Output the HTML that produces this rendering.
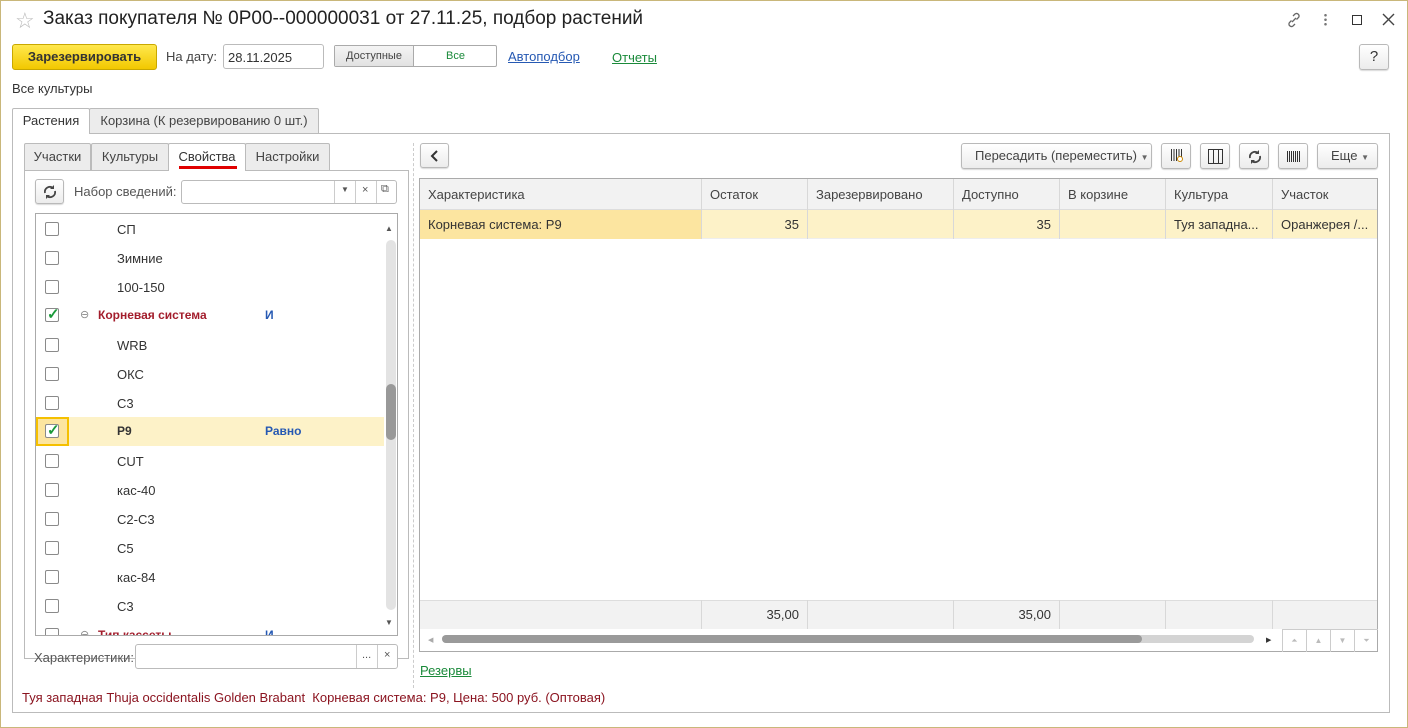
<!DOCTYPE html>
<html><head><meta charset="utf-8">
<style>
*{box-sizing:border-box}
body{margin:0;width:1408px;height:728px;overflow:hidden;background:#fff;font-family:"Liberation Sans",Arial,sans-serif;font-size:13px;color:#333;position:relative}
.a{position:absolute}
.frame{left:0;top:0;width:1408px;height:728px;border:1px solid #c9b77a}
.btn{position:absolute;border:1px solid #b9b9b9;border-radius:3px;background:linear-gradient(#fff,#ececec);box-shadow:0 1px 1px rgba(0,0,0,.15)}
.inp{position:absolute;border:1px solid #bbb;border-radius:3px;background:#fff}
.tab{position:absolute;border:1px solid #bbb;border-bottom:none;background:#ececec;text-align:center;color:#444;border-radius:2px 2px 0 0}
.cb{position:absolute;left:45px;width:14px;height:14px;border:1px solid #8a8a8a;border-radius:2px;background:#fff}
.col{position:absolute;top:0;height:100%;border-left:1px solid #d8d8d8}
.hd{position:absolute;top:8px;color:#444}
.ck{position:absolute;left:47px;color:#1a9a3a;font-size:15px;font-weight:bold}
</style></head><body>
<div class="a frame"></div>
<div class="a" style="left:15px;top:8px;font-size:22px;color:#bbb">☆</div>
<div class="a" style="left:43px;top:8px;font-size:19px;color:#222">Заказ покупателя № 0P00--000000031 от 27.11.25, подбор растений</div>
<svg class="a" style="left:1285px;top:11px" width="18" height="18" viewBox="0 0 18 18"><g fill="none" stroke="#666" stroke-width="1.3"><path d="M7 11l4-4"/><path d="M8 5l2-2a2.5 2.5 0 013.5 3.5l-2 2"/><path d="M10 13l-2 2a2.5 2.5 0 01-3.5-3.5l2-2"/></g></svg>
<div class="a" style="left:1324px;top:13px;width:3px;height:14px;background:radial-gradient(circle,#777 1.2px,transparent 1.4px) 0 0/3px 4.5px"></div>
<div class="a" style="left:1352px;top:15px;width:10px;height:10px;border:1.3px solid #333"></div>
<svg class="a" style="left:1382px;top:13px" width="13" height="13"><path d="M1 1l11 11M12 1L1 12" stroke="#444" stroke-width="1.4"/></svg>

<div class="a" style="left:12px;top:44px;width:145px;height:26px;border:1px solid #c9a800;border-radius:3px;background:linear-gradient(#ffe84d,#f2c800);font-weight:bold;text-align:center;line-height:24px;color:#333;font-size:13px">Зарезервировать</div>
<div class="a" style="left:166px;top:49px;color:#444">На дату:</div>
<div class="inp" style="left:223px;top:44px;width:101px;height:25px"><span class="a" style="left:4px;top:5px;color:#333">28.11.2025</span></div>
<div class="a" style="left:334px;top:45px;width:163px;height:22px;border:1px solid #aaa;border-radius:2px;background:#fff"><div class="a" style="left:0;top:0;width:79px;height:20px;background:linear-gradient(#f4f4f4,#e2e2e2);border-right:1px solid #aaa;font-size:11px;text-align:center;line-height:20px;color:#444">Доступные</div><div class="a" style="left:80px;top:0;width:81px;height:20px;font-size:11px;text-align:center;line-height:20px;color:#1a8a3a">Все</div></div>
<div class="a" style="left:508px;top:49px;color:#2659b3;text-decoration:underline">Автоподбор</div>
<div class="a" style="left:612px;top:50px;color:#1a8a3a;text-decoration:underline">Отчеты</div>
<div class="btn" style="left:1359px;top:44px;width:30px;height:26px;text-align:center;line-height:24px;font-size:15px;color:#333">?</div>

<div class="a" style="left:12px;top:81px;color:#333">Все культуры</div>

<div class="a" style="left:12px;top:133px;width:1378px;height:580px;border:1px solid #bbb"></div>
<div class="tab" style="left:12px;top:108px;width:78px;height:26px;background:#fff;line-height:24px;color:#333">Растения</div>
<div class="tab" style="left:89px;top:108px;width:230px;height:25px;line-height:24px">Корзина (К резервированию 0 шт.)</div>

<div class="a" style="left:24px;top:170px;width:385px;height:489px;border:1px solid #bbb"></div>
<div class="tab" style="left:24px;top:143px;width:67px;height:27px;line-height:26px">Участки</div>
<div class="tab" style="left:91px;top:143px;width:78px;height:27px;line-height:26px">Культуры</div>
<div class="tab" style="left:168px;top:143px;width:78px;height:28px;line-height:26px;background:#fff;color:#333">Свойства</div>
<div class="a" style="left:179px;top:166px;width:58px;height:3px;background:#e00000"></div>
<div class="tab" style="left:245px;top:143px;width:85px;height:27px;line-height:26px">Настройки</div>

<div class="btn" style="left:35px;top:179px;width:29px;height:25px"><svg class="a" style="left:6px;top:4px" width="16" height="16" viewBox="0 0 16 16"><path d="M3 9a5 5 0 018-5M13 7a5 5 0 01-8 5" fill="none" stroke="#444" stroke-width="1.8"/><path d="M12 1v4H8zM4 15v-4h4z" fill="#444"/></svg></div>
<div class="a" style="left:74px;top:184px;color:#555">Набор сведений:</div>
<div class="inp" style="left:181px;top:180px;width:216px;height:24px"><div class="col" style="left:152px;border-color:#ccc"></div><div class="col" style="left:173px;border-color:#ccc"></div><div class="col" style="left:194px;border-color:#ccc"></div><span class="a" style="left:159px;top:4px;font-size:8px;color:#555">▼</span><span class="a" style="left:180px;top:3px;font-size:11px;color:#555">×</span><span class="a" style="left:199px;top:2px;font-size:11px;color:#555">⧉</span></div>

<div class="a" style="left:35px;top:213px;width:363px;height:423px;border:1px solid #aaa;overflow:hidden">
 <div class="a" style="left:349px;top:10px;font-size:8px;color:#555">▲</div>
 <div class="a" style="left:349px;top:404px;font-size:8px;color:#555">▼</div>
 <div class="a" style="left:350px;top:26px;width:10px;height:370px;background:#e3e3e3;border-radius:5px"></div>
 <div class="a" style="left:350px;top:170px;width:10px;height:56px;background:#999;border-radius:5px"></div>
</div>
<div class="a" style="left:36px;top:214px;width:348px;height:421px;overflow:hidden">
 <div class="a" style="left:0;top:203px;width:348px;height:29px;background:#fdf2c8"></div>
 <div class="a" style="left:0;top:203px;width:33px;height:29px;border:2px solid #f5c000;background:#fce5a0"></div>
</div>
<div style="position:absolute;left:0;top:214px;width:400px;height:421px;overflow:hidden">
<div class="cb" style="top:8px"></div><div class="a" style="left:117px;top:8px">СП</div>
<div class="cb" style="top:37px"></div><div class="a" style="left:117px;top:37px">Зимние</div>
<div class="cb" style="top:66px"></div><div class="a" style="left:117px;top:66px">100-150</div>
<div class="cb" style="top:94px"></div><div class="ck" style="top:91px">✓</div>
<div class="a" style="left:80px;top:94px;color:#888;font-size:11px">⊖</div><div class="a" style="left:98px;top:94px;color:#a31d2c;font-weight:bold;font-size:12px">Корневая система</div><div class="a" style="left:265px;top:94px;color:#2659b3;font-weight:bold;font-size:12px">И</div>
<div class="cb" style="top:124px"></div><div class="a" style="left:117px;top:124px">WRB</div>
<div class="cb" style="top:153px"></div><div class="a" style="left:117px;top:153px">ОКС</div>
<div class="cb" style="top:182px"></div><div class="a" style="left:117px;top:182px">С3</div>
<div class="cb" style="top:210px"></div><div class="ck" style="top:207px">✓</div>
<div class="a" style="left:117px;top:210px;font-weight:bold;font-size:12px">Р9</div><div class="a" style="left:265px;top:210px;color:#2659b3;font-weight:bold;font-size:12px">Равно</div>
<div class="cb" style="top:240px"></div><div class="a" style="left:117px;top:240px">CUT</div>
<div class="cb" style="top:269px"></div><div class="a" style="left:117px;top:269px">кас-40</div>
<div class="cb" style="top:298px"></div><div class="a" style="left:117px;top:298px">С2-С3</div>
<div class="cb" style="top:327px"></div><div class="a" style="left:117px;top:327px">С5</div>
<div class="cb" style="top:356px"></div><div class="a" style="left:117px;top:356px">кас-84</div>
<div class="cb" style="top:385px"></div><div class="a" style="left:117px;top:385px">С3</div>
<div class="cb" style="top:414px"></div><div class="a" style="left:80px;top:414px;color:#888;font-size:11px">⊖</div><div class="a" style="left:98px;top:414px;color:#a31d2c;font-weight:bold;font-size:12px">Тип кассеты</div><div class="a" style="left:265px;top:414px;color:#2659b3;font-weight:bold;font-size:12px">И</div>
</div>

<div class="a" style="left:34px;top:650px;color:#555">Характеристики:</div>
<div class="inp" style="left:135px;top:644px;width:263px;height:25px"><div class="col" style="left:220px;border-color:#ccc"></div><div class="col" style="left:241px;border-color:#ccc"></div><span class="a" style="left:226px;top:4px;font-size:11px;color:#555">...</span><span class="a" style="left:248px;top:4px;font-size:11px;color:#555">×</span></div>

<div class="a" style="left:413px;top:143px;height:545px;border-left:1px dashed #ccc"></div>

<div class="btn" style="left:420px;top:143px;width:29px;height:25px"><svg class="a" style="left:8px;top:5px" width="12" height="14"><path d="M8 2L3 7l5 5" fill="none" stroke="#333" stroke-width="2"/></svg></div>
<div class="btn" style="left:961px;top:143px;width:191px;height:26px;line-height:24px;padding-left:13px;color:#444">Пересадить (переместить) <span style="font-size:8px;color:#666">▼</span></div>
<div class="btn" style="left:1161px;top:143px;width:30px;height:26px"><div class="a" style="left:9px;top:5px;width:11px;height:12px;background:repeating-linear-gradient(90deg,#333 0 1px,transparent 1px 2.5px)"></div><div class="a" style="left:15px;top:12px;width:6px;height:6px;border:1.5px solid #c80;border-radius:50%;background:#fff"></div></div>
<div class="btn" style="left:1200px;top:143px;width:30px;height:26px"><div class="a" style="left:7px;top:5px;width:15px;height:15px;border:1px solid #333;background:linear-gradient(90deg,transparent 4px,#333 4px 5px,transparent 5px 9px,#333 9px 10px,transparent 10px)"></div></div>
<div class="btn" style="left:1239px;top:143px;width:30px;height:26px"><svg class="a" style="left:7px;top:5px" width="16" height="16" viewBox="0 0 16 16"><path d="M3 9a5 5 0 018-5M13 7a5 5 0 01-8 5" fill="none" stroke="#444" stroke-width="1.8"/><path d="M12 1v4H8zM4 15v-4h4z" fill="#444"/></svg></div>
<div class="btn" style="left:1278px;top:143px;width:30px;height:26px"><div class="a" style="left:8px;top:7px;width:13px;height:11px;background:repeating-linear-gradient(90deg,#333 0 1px,transparent 1px 2px)"></div></div>
<div class="btn" style="left:1317px;top:143px;width:61px;height:26px;line-height:24px;padding-left:13px;color:#444">Еще <span style="font-size:8px;color:#666">▼</span></div>

<div class="a" style="left:419px;top:178px;width:959px;height:474px;border:1px solid #aaa">
 <div class="a" style="left:0;top:0;width:957px;height:31px;background:#f2f2f2;border-bottom:1px solid #ddd"></div>
 <div class="a" style="left:0;top:31px;width:957px;height:29px;background:#fdf2c8;border-bottom:1px solid #eee"></div>
 <div class="a" style="left:0;top:31px;width:281px;height:29px;background:#fce5a0"></div>
 <div class="a" style="left:0;top:421px;width:957px;height:29px;background:#f2f2f2;border-top:1px solid #ddd"></div>
 <div class="a" style="left:0;top:0;width:957px;height:60px">
  <div class="col" style="left:281px"></div><div class="col" style="left:387px"></div><div class="col" style="left:533px"></div><div class="col" style="left:639px"></div><div class="col" style="left:745px"></div><div class="col" style="left:852px"></div>
 </div>
 <div class="a" style="left:0;top:421px;width:957px;height:29px">
  <div class="col" style="left:281px"></div><div class="col" style="left:387px"></div><div class="col" style="left:533px"></div><div class="col" style="left:639px"></div><div class="col" style="left:745px"></div><div class="col" style="left:852px"></div>
 </div>
 <div class="hd" style="left:8px">Характеристика</div><div class="hd" style="left:290px">Остаток</div><div class="hd" style="left:396px">Зарезервировано</div><div class="hd" style="left:542px">Доступно</div><div class="hd" style="left:648px">В корзине</div><div class="hd" style="left:754px">Культура</div><div class="hd" style="left:861px">Участок</div>
 <div class="a" style="left:8px;top:38px">Корневая система: Р9</div>
 <div class="a" style="left:281px;width:98px;text-align:right;top:38px">35</div>
 <div class="a" style="left:533px;width:98px;text-align:right;top:38px">35</div>
 <div class="a" style="left:754px;top:38px">Туя западна...</div>
 <div class="a" style="left:861px;top:38px">Оранжерея /...</div>
 <div class="a" style="left:281px;width:98px;text-align:right;top:428px">35,00</div>
 <div class="a" style="left:533px;width:98px;text-align:right;top:428px">35,00</div>
 <div class="a" style="left:8px;top:457px;font-size:7px;color:#aaa">◀</div>
 <div class="a" style="left:22px;top:456px;width:812px;height:8px;background:#d4d4d4;border-radius:4px"></div>
 <div class="a" style="left:22px;top:456px;width:700px;height:8px;background:#9a9a9a;border-radius:4px"></div>
 <div class="a" style="left:846px;top:457px;font-size:7px;color:#333">▶</div>
 <div class="a" style="left:862px;top:450px;width:96px;height:23px;border-top:1px solid #ccc;border-left:1px solid #ccc;display:flex">
  <div style="flex:1;border-right:1px solid #ccc;text-align:center;font-size:8px;color:#bbb;line-height:22px">⏶</div><div style="flex:1;border-right:1px solid #ccc;text-align:center;font-size:8px;color:#bbb;line-height:22px">▲</div><div style="flex:1;border-right:1px solid #ccc;text-align:center;font-size:8px;color:#bbb;line-height:22px">▼</div><div style="flex:1;text-align:center;font-size:8px;color:#bbb;line-height:22px">⏷</div>
 </div>
</div>

<div class="a" style="left:420px;top:663px;color:#1a8a3a;text-decoration:underline">Резервы</div>
<div class="a" style="left:22px;top:690px;color:#8b1420">Туя западная Thuja occidentalis Golden Brabant&nbsp; Корневая система: Р9, Цена: 500 руб. (Оптовая)</div>
</body></html>
